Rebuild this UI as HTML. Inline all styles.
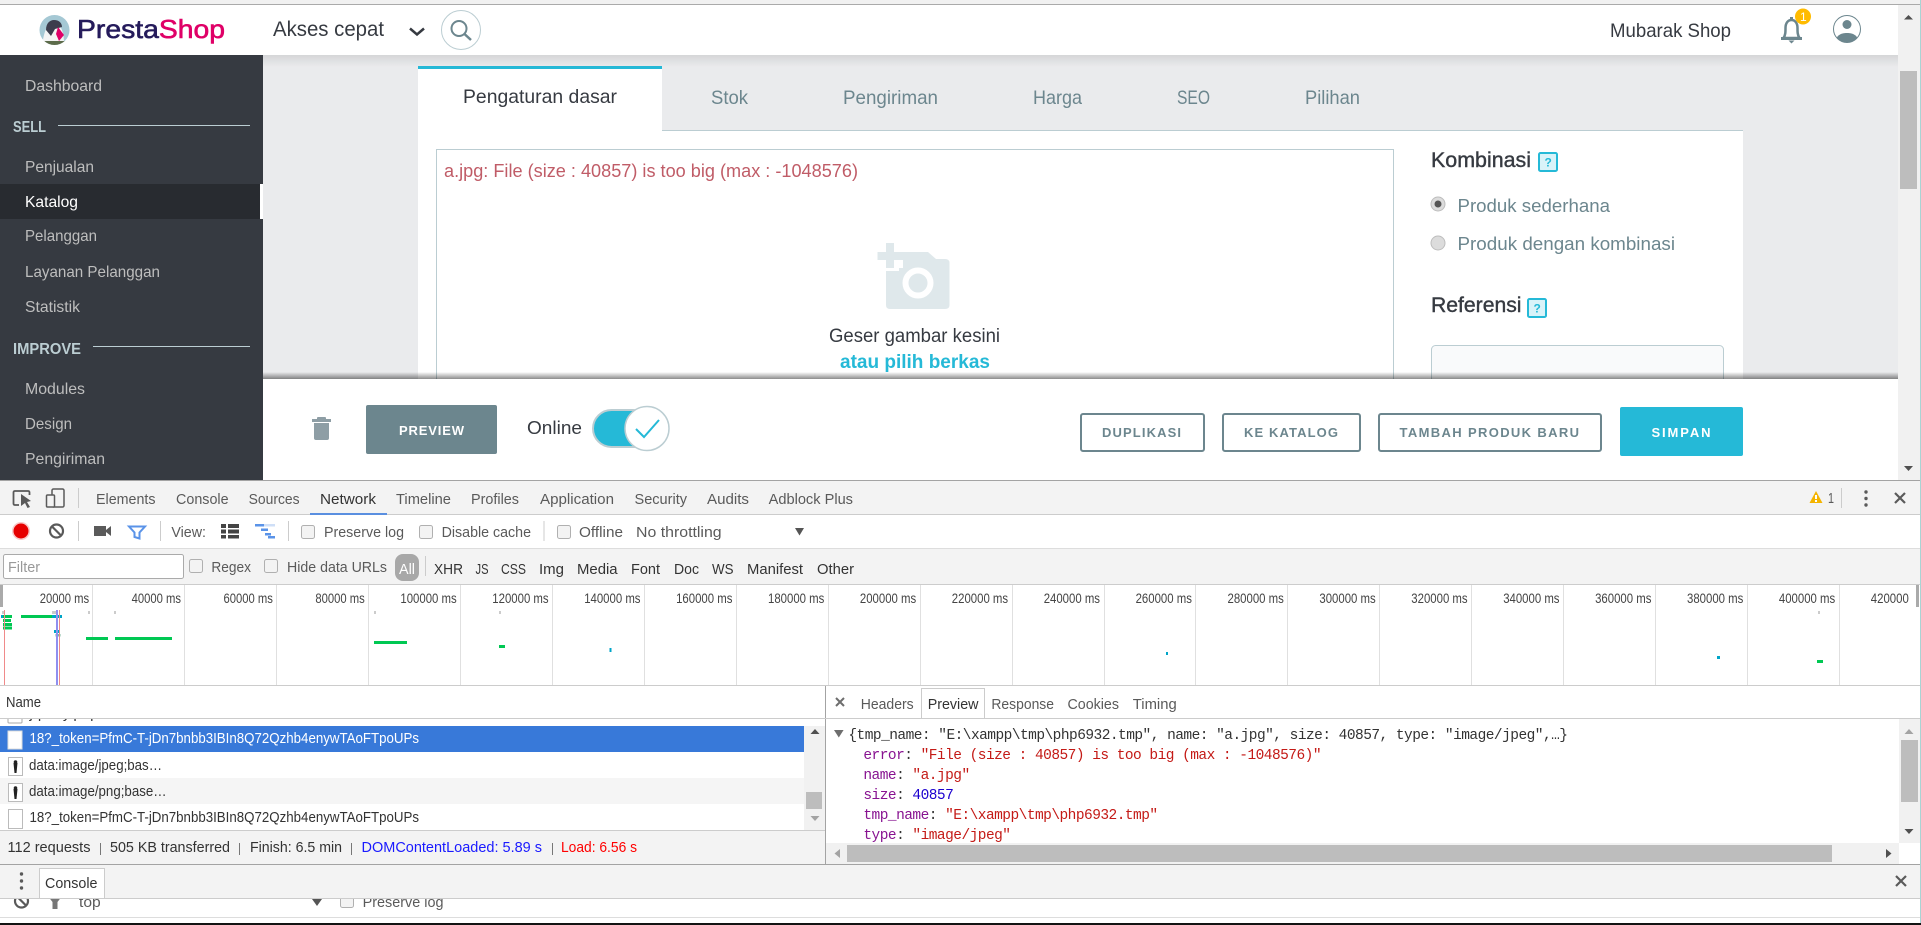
<!DOCTYPE html>
<html lang="id">
<head>
<meta charset="utf-8">
<title>PrestaShop - Produk</title>
<style>
html,body{margin:0;padding:0;background:#fff;overflow:hidden;width:1921px;height:925px}
svg{display:block;font-family:"Liberation Sans",Arial,sans-serif}
.side{font-size:16px;fill:#bebebe}
.sec{font-size:16px;font-weight:bold;fill:#bbcdd2}
.tab{font-size:19.5px;fill:#6c868e}
.btn{font-size:13px;font-weight:bold;fill:#6c868e}
.d{font-size:15px;fill:#5a5a5a}
.f{font-size:15px;fill:#333}
.t{font-size:13.5px;fill:#444}
.st{font-size:15px;fill:#333}
.m{font-family:"Liberation Mono",monospace;font-size:14.5px;letter-spacing:-.53px;fill:#333}
.k{fill:#881391}.v{fill:#c41a16}.n{fill:#1c00cf}
</style>
</head>
<body>
<svg width="1921" height="925" viewBox="0 0 1921 925" xmlns="http://www.w3.org/2000/svg">
<defs>
<linearGradient id="hs" x1="0" y1="0" x2="0" y2="1"><stop offset="0" stop-color="#000" stop-opacity=".09"/><stop offset="1" stop-color="#000" stop-opacity="0"/></linearGradient>
<linearGradient id="fs" x1="0" y1="0" x2="0" y2="1"><stop offset="0" stop-color="#000" stop-opacity="0"/><stop offset="1" stop-color="#000" stop-opacity=".45"/></linearGradient>
<clipPath id="tl"><rect x="0" y="585" width="1910" height="100"/></clipPath>
<clipPath id="rowclip"><rect x="0" y="719" width="804" height="7"/></clipPath>
<clipPath id="drawclip"><rect x="0" y="899" width="1921" height="18"/></clipPath>
<clipPath id="json"><rect x="826" y="719" width="1073" height="124"/></clipPath>
<clipPath id="logo"><circle cx="54.5" cy="30" r="15"/></clipPath>
<clipPath id="user"><circle cx="1847" cy="29" r="13.5"/></clipPath>
</defs>

<!-- window top -->
<rect width="1921" height="925" fill="#fff"/>
<rect width="1921" height="4" fill="#f1f1f1"/>
<rect y="4" width="1921" height="1" fill="#aaa"/>

<!-- content background -->
<rect x="263" y="55" width="1635" height="325" fill="#eaebed"/>

<!-- panel -->
<g>
<rect x="418" y="131" width="1325" height="250" fill="#fff"/>
<rect x="662" y="130" width="1081" height="1" fill="#bbcdd2"/>
<rect x="418" y="66" width="244" height="65" fill="#fff"/>
<rect x="418" y="66" width="244" height="3" fill="#25b9d7"/>
<text x="463" y="103" class="tab" style="fill:#363a41" textLength="154" lengthAdjust="spacingAndGlyphs">Pengaturan dasar</text>
<text x="711" y="104" class="tab" textLength="37" lengthAdjust="spacingAndGlyphs">Stok</text>
<text x="843" y="104" class="tab" textLength="95" lengthAdjust="spacingAndGlyphs">Pengiriman</text>
<text x="1033" y="104" class="tab" textLength="49" lengthAdjust="spacingAndGlyphs">Harga</text>
<text x="1177" y="104" class="tab" textLength="33" lengthAdjust="spacingAndGlyphs">SEO</text>
<text x="1305" y="104" class="tab" textLength="55" lengthAdjust="spacingAndGlyphs">Pilihan</text>

<!-- dropzone -->
<rect x="436.5" y="149.5" width="957" height="240" fill="#fff" stroke="#bbcdd2"/>
<text x="444" y="177" font-size="18.500" fill="#c05c67" textLength="414" lengthAdjust="spacingAndGlyphs">a.jpg: File (size : 40857) is too big (max : -1048576)</text>
<path fill="#dfe8eb" d="M903 252H928L936 259H945Q949.500 259 949.500 263V305Q949.500 309 945 309H890Q886 309 886 305V271H899V268H903Z"/>
<path fill="#dfe8eb" d="M886 243H894V252H903V260H894V268H886V260H877.500V252H886Z"/>
<circle cx="918" cy="283" r="12.500" fill="none" stroke="#fff" stroke-width="6"/>
<text x="829" y="342" font-size="19" fill="#363a41" textLength="171" lengthAdjust="spacingAndGlyphs">Geser gambar kesini</text>
<text x="840" y="368" font-size="19" font-weight="bold" fill="#25b9d7" textLength="150" lengthAdjust="spacingAndGlyphs">atau pilih berkas</text>

<!-- side form -->
<text x="1431" y="167" font-size="21" stroke="#363a41" stroke-width=".4" fill="#363a41" textLength="100" lengthAdjust="spacingAndGlyphs">Kombinasi</text>
<rect x="1539" y="153" width="18" height="18" rx="1.500" fill="#d9f3f9" stroke="#25b9d7" stroke-width="2"/>
<text x="1544.500" y="166.500" font-size="12" font-weight="bold" fill="#25b9d7">?</text>
<circle cx="1438" cy="204" r="7" fill="#dcdcdc" stroke="#bdbdbd"/>
<circle cx="1438" cy="204" r="3.500" fill="#555"/>
<text x="1457.500" y="212" font-size="18.500" fill="#6c868e" textLength="152.500" lengthAdjust="spacingAndGlyphs">Produk sederhana</text>
<circle cx="1438" cy="243" r="7" fill="#dcdcdc" stroke="#bdbdbd"/>
<text x="1457.500" y="250" font-size="18.500" fill="#6c868e" textLength="217.500" lengthAdjust="spacingAndGlyphs">Produk dengan kombinasi</text>
<text x="1431" y="312" font-size="21" stroke="#363a41" stroke-width=".4" fill="#363a41" textLength="90.500" lengthAdjust="spacingAndGlyphs">Referensi</text>
<rect x="1528" y="299" width="18" height="18" rx="1.500" fill="#d9f3f9" stroke="#25b9d7" stroke-width="2"/>
<text x="1533.500" y="312.500" font-size="12" font-weight="bold" fill="#25b9d7">?</text>
<rect x="1431.500" y="345.500" width="292" height="60" rx="4" fill="#f9fafb" stroke="#bbcdd2"/>
</g>

<!-- header -->
<rect x="0" y="5" width="1898" height="50" fill="#fff"/>
<rect x="263" y="55" width="1635" height="12" fill="url(#hs)"/>
<g clip-path="url(#logo)">
<rect x="39" y="15" width="31" height="31" fill="#a5c8d4"/>
<path d="M42 45C44 33 46 24 54 22C62 24 64 34 64 45Z" fill="#f4f4f4"/>
<path d="M46 30C46 23 50 20 54 20C59 20 62 23 62 27L55 29L51 36Z" fill="#3d3d4d"/>
<path d="M58 27L64 35L59 41L56 34Z" fill="#df0067"/>
<rect x="44" y="41" width="22" height="5" fill="#5c6b4a"/>
</g>
<text x="77" y="38" font-size="26" stroke-width=".6" textLength="148" lengthAdjust="spacingAndGlyphs"><tspan fill="#251b5b" stroke="#251b5b">Presta</tspan><tspan fill="#df0067" stroke="#df0067">Shop</tspan></text>
<text x="273" y="36" font-size="21.500" fill="#363a41" textLength="111" lengthAdjust="spacingAndGlyphs">Akses cepat</text>
<path d="M410 28.500L417 34.500L424 28.500" fill="none" stroke="#363a41" stroke-width="2.500"/>
<circle cx="461" cy="30" r="19.500" fill="#fff" stroke="#bbcdd2"/>
<circle cx="459" cy="28.500" r="7.500" fill="none" stroke="#6c868e" stroke-width="2"/>
<path d="M464.500 34L471 40" stroke="#6c868e" stroke-width="2.500" fill="none"/>
<text x="1610" y="37" font-size="19.500" fill="#363a41" textLength="121" lengthAdjust="spacingAndGlyphs">Mubarak Shop</text>
<path d="M1783.500 38C1785.500 35 1785.500 32 1785.500 28C1785.500 23 1788 20 1791.500 20S1797.500 23 1797.500 28C1797.500 32 1797.500 35 1799.500 38Z" fill="none" stroke="#6c868e" stroke-width="2.500"/>
<rect x="1781" y="37" width="21" height="3" fill="#6c868e"/>
<path d="M1788.500 40.500H1794.500L1791.500 43.500Z" fill="#6c868e"/>
<rect x="1790" y="17" width="3" height="3" fill="#6c868e"/>
<circle cx="1803" cy="16.500" r="8" fill="#fb0"/>
<text x="1800" y="21" font-size="12" fill="#fff">1</text>
<circle cx="1847" cy="29" r="13.500" fill="#fff" stroke="#6c868e"/>
<g clip-path="url(#user)">
<circle cx="1847" cy="24.500" r="4.500" fill="#6c868e"/>
<path d="M1836 44C1835 36 1840 33 1847 33S1859 36 1858 44Z" fill="#6c868e"/>
</g>

<!-- sidebar -->
<rect x="0" y="55" width="263" height="425" fill="#363a41"/>
<rect x="0" y="184" width="260" height="35" fill="#282b30"/>
<rect x="260" y="184" width="3" height="35" fill="#fff"/>
<text x="25" y="91" class="side" textLength="77" lengthAdjust="spacingAndGlyphs">Dashboard</text>
<text x="13" y="132" class="sec" textLength="33" lengthAdjust="spacingAndGlyphs">SELL</text>
<rect x="58" y="125" width="192" height="1" fill="#bbcdd2"/>
<text x="25" y="172" class="side" textLength="69" lengthAdjust="spacingAndGlyphs">Penjualan</text>
<text x="25" y="207" class="side" style="fill:#fff" textLength="53" lengthAdjust="spacingAndGlyphs">Katalog</text>
<text x="25" y="241" class="side" textLength="72" lengthAdjust="spacingAndGlyphs">Pelanggan</text>
<text x="25" y="277" class="side" textLength="135" lengthAdjust="spacingAndGlyphs">Layanan Pelanggan</text>
<text x="25" y="312" class="side" textLength="55" lengthAdjust="spacingAndGlyphs">Statistik</text>
<text x="13" y="354" class="sec" textLength="68" lengthAdjust="spacingAndGlyphs">IMPROVE</text>
<rect x="93" y="346" width="157" height="1" fill="#bbcdd2"/>
<text x="25" y="394" class="side" textLength="60" lengthAdjust="spacingAndGlyphs">Modules</text>
<text x="25" y="429" class="side" textLength="47" lengthAdjust="spacingAndGlyphs">Design</text>
<text x="25" y="464" class="side" textLength="80" lengthAdjust="spacingAndGlyphs">Pengiriman</text>

<!-- footer bar -->
<rect x="263" y="372" width="1635" height="7" fill="url(#fs)"/>
<rect x="263" y="379" width="1635" height="101" fill="#fff"/>
<g fill="#8e9ea5">
<rect x="312" y="419" width="19" height="3"/><rect x="317" y="417" width="9" height="3" rx="1"/>
<path d="M314 423H329V438Q329 440 327 440H316Q314 440 314 438Z"/>
</g>
<rect x="366" y="405" width="131" height="49" rx="2" fill="#6c868e"/>
<text x="399" y="435" class="btn" style="fill:#fff" textLength="65">PREVIEW</text>
<text x="527" y="434" font-size="18.500" fill="#363a41" textLength="55" lengthAdjust="spacingAndGlyphs">Online</text>
<rect x="593" y="410" width="58" height="37" rx="18.500" fill="#25b9d7" stroke="#bbcdd2" stroke-width="2"/>
<circle cx="647" cy="428.500" r="22" fill="#fff" stroke="#bbcdd2" stroke-width="1.500"/>
<path d="M636 429L644 437L659 420" fill="none" stroke="#25b9d7" stroke-width="2"/>
<rect x="1081" y="414" width="123" height="37" rx="2" fill="#fff" stroke="#6c868e" stroke-width="2"/>
<text x="1102" y="437" class="btn" textLength="79">DUPLIKASI</text>
<rect x="1223" y="414" width="137" height="37" rx="2" fill="#fff" stroke="#6c868e" stroke-width="2"/>
<text x="1244" y="437" class="btn" textLength="94">KE KATALOG</text>
<rect x="1379" y="414" width="222" height="37" rx="2" fill="#fff" stroke="#6c868e" stroke-width="2"/>
<text x="1399.500" y="437" class="btn" textLength="179.500">TAMBAH PRODUK BARU</text>
<rect x="1620" y="407" width="123" height="49" rx="2" fill="#25b9d7"/>
<text x="1651.500" y="437" class="btn" style="fill:#fff" textLength="59">SIMPAN</text>

<!-- page scrollbar -->
<rect x="1898" y="5" width="23" height="475" fill="#f1f1f1"/>
<rect x="1900" y="71" width="17" height="118" fill="#bdbdbd"/>
<path d="M1904 19.500H1913L1908.500 15Z" fill="#505050"/>
<path d="M1904 466H1913L1908.500 471Z" fill="#505050"/>

<!-- devtools main toolbar -->
<rect x="0" y="480" width="1921" height="1" fill="#a3a3a3"/>
<rect x="0" y="481" width="1921" height="33" fill="#f3f3f3"/>
<rect x="0" y="514" width="1921" height="1" fill="#ccc"/>
<path d="M19 505H15Q13.500 505 13.500 503.500V492.500Q13.500 491 15 491H28Q29.500 491 29.500 492.500V495" fill="none" stroke="#5a5a5a" stroke-width="1.800"/>
<path d="M21 494L31 501L27 502L30 507L27.500 508L25 503L21 506Z" fill="#5a5a5a"/>
<rect x="52" y="489" width="12" height="18" rx="1.500" fill="none" stroke="#5a5a5a" stroke-width="1.500"/>
<rect x="46.500" y="495" width="8" height="12" rx="1" fill="#f3f3f3" stroke="#5a5a5a" stroke-width="1.500"/>
<rect x="78" y="488" width="1" height="20" fill="#ccc"/>
<text x="96" y="504" class="d" textLength="59.500" lengthAdjust="spacingAndGlyphs">Elements</text>
<text x="176" y="504" class="d" textLength="52.600" lengthAdjust="spacingAndGlyphs">Console</text>
<text x="248.600" y="504" class="d" textLength="51" lengthAdjust="spacingAndGlyphs">Sources</text>
<text x="320" y="504" class="d" style="fill:#333" textLength="56" lengthAdjust="spacingAndGlyphs">Network</text>
<rect x="310" y="513" width="77" height="2" fill="#5a8fe0"/>
<text x="396" y="504" class="d" textLength="55" lengthAdjust="spacingAndGlyphs">Timeline</text>
<text x="471" y="504" class="d" textLength="48" lengthAdjust="spacingAndGlyphs">Profiles</text>
<text x="540" y="504" class="d" textLength="74" lengthAdjust="spacingAndGlyphs">Application</text>
<text x="634.500" y="504" class="d" textLength="52.500" lengthAdjust="spacingAndGlyphs">Security</text>
<text x="707" y="504" class="d" textLength="42" lengthAdjust="spacingAndGlyphs">Audits</text>
<text x="768.600" y="504" class="d" textLength="84.400" lengthAdjust="spacingAndGlyphs">Adblock Plus</text>
<path d="M1816 491L1822.500 503H1809.500Z" fill="#f4b400"/>
<rect x="1815" y="495" width="2" height="4" fill="#fff"/><rect x="1815" y="500" width="2" height="2" fill="#fff"/>
<text x="1828" y="503" class="d" textLength="6" lengthAdjust="spacingAndGlyphs">1</text>
<rect x="1841" y="488" width="1" height="20" fill="#ccc"/>
<circle cx="1866" cy="492" r="1.700" fill="#5a5a5a"/><circle cx="1866" cy="498.500" r="1.700" fill="#5a5a5a"/><circle cx="1866" cy="505" r="1.700" fill="#5a5a5a"/>
<path d="M1895 493L1905 503M1905 493L1895 503" stroke="#5a5a5a" stroke-width="2.200"/>

<!-- network toolbar -->
<rect x="0" y="515" width="1921" height="33" fill="#fff"/>
<rect x="0" y="548" width="1921" height="1" fill="#ddd"/>
<circle cx="21" cy="531" r="9" fill="#f9c9c9"/><circle cx="21" cy="531" r="7.500" fill="#e60000"/>
<circle cx="56.500" cy="531" r="6.500" fill="none" stroke="#5a5a5a" stroke-width="2.200"/>
<path d="M52 526.500L61 535.500" stroke="#5a5a5a" stroke-width="2.200"/>
<rect x="78" y="521" width="1" height="20" fill="#ccc"/>
<rect x="94" y="526" width="12" height="10" fill="#5a5a5a"/><path d="M106 530L111 526V536L106 532Z" fill="#5a5a5a"/>
<path d="M129 526.500H145L139.500 532.500V538.500L134.500 537V532.500Z" fill="none" stroke="#5a93e8" stroke-width="2"/>
<rect x="160" y="521" width="1" height="20" fill="#ccc"/>
<text x="171.400" y="537" class="d" textLength="34.600" lengthAdjust="spacingAndGlyphs">View:</text>
<g fill="#444"><rect x="221" y="524" width="5" height="4"/><rect x="228" y="524" width="11" height="4"/><rect x="221" y="529.500" width="5" height="4"/><rect x="228" y="529.500" width="11" height="4"/><rect x="221" y="535" width="5" height="3.500"/><rect x="228" y="535" width="11" height="3.500"/></g>
<g fill="#5a93e8"><rect x="255" y="524" width="9" height="2.500"/><rect x="261" y="528.500" width="7" height="2.500"/><rect x="265" y="533" width="6" height="2.500"/><rect x="268" y="536" width="7" height="2.500"/></g>
<rect x="264" y="524" width="11" height="2.500" fill="#cfdff7"/>
<rect x="288" y="521" width="1" height="20" fill="#ccc"/>
<rect x="301.500" y="525.500" width="13" height="13" rx="2" fill="#f3f3f3" stroke="#b0b0b0"/>
<text x="324" y="537" class="d" textLength="80" lengthAdjust="spacingAndGlyphs">Preserve log</text>
<rect x="419.500" y="525.500" width="13" height="13" rx="2" fill="#f3f3f3" stroke="#b0b0b0"/>
<text x="441.600" y="537" class="d" textLength="89.400" lengthAdjust="spacingAndGlyphs">Disable cache</text>
<rect x="543.500" y="521" width="1" height="20" fill="#ccc"/>
<rect x="557.500" y="525.500" width="13" height="13" rx="2" fill="#f3f3f3" stroke="#b0b0b0"/>
<text x="579" y="537" class="d" textLength="44" lengthAdjust="spacingAndGlyphs">Offline</text>
<text x="636" y="537" class="d" textLength="85.600" lengthAdjust="spacingAndGlyphs">No throttling</text>
<path d="M795 528H804L799.500 535.500Z" fill="#555"/>

<!-- filter bar -->
<rect x="0" y="549" width="1921" height="35" fill="#f3f3f3"/>
<rect x="0" y="584" width="1921" height="1" fill="#ccc"/>
<rect x="3.500" y="554.500" width="180" height="24" rx="2" fill="#fff" stroke="#aaa"/>
<text x="8" y="572" class="d" style="fill:#999" textLength="32" lengthAdjust="spacingAndGlyphs">Filter</text>
<rect x="189.500" y="559.500" width="13" height="13" rx="2" fill="#f3f3f3" stroke="#b0b0b0"/>
<text x="211.400" y="572" class="d" textLength="39.600" lengthAdjust="spacingAndGlyphs">Regex</text>
<rect x="264.500" y="559.500" width="13" height="13" rx="2" fill="#f3f3f3" stroke="#b0b0b0"/>
<text x="287" y="572" class="d" textLength="100" lengthAdjust="spacingAndGlyphs">Hide data URLs</text>
<rect x="395" y="554" width="24" height="27" rx="8" fill="#a8a8a8"/>
<text x="399" y="574" class="d" style="fill:#fff" textLength="16" lengthAdjust="spacingAndGlyphs">All</text>
<rect x="425" y="556" width="1" height="20" fill="#ccc"/>
<text x="434" y="574" class="f" textLength="29" lengthAdjust="spacingAndGlyphs">XHR</text>
<text x="475.500" y="574" class="f" textLength="13" lengthAdjust="spacingAndGlyphs">JS</text>
<text x="501" y="574" class="f" textLength="25" lengthAdjust="spacingAndGlyphs">CSS</text>
<text x="539" y="574" class="f" textLength="25" lengthAdjust="spacingAndGlyphs">Img</text>
<text x="577" y="574" class="f" textLength="40.600" lengthAdjust="spacingAndGlyphs">Media</text>
<text x="631" y="574" class="f" textLength="29" lengthAdjust="spacingAndGlyphs">Font</text>
<text x="674" y="574" class="f" textLength="25" lengthAdjust="spacingAndGlyphs">Doc</text>
<text x="712" y="574" class="f" textLength="21.500" lengthAdjust="spacingAndGlyphs">WS</text>
<text x="747" y="574" class="f" textLength="56" lengthAdjust="spacingAndGlyphs">Manifest</text>
<text x="817" y="574" class="f" textLength="37" lengthAdjust="spacingAndGlyphs">Other</text>

<!-- timeline -->
<rect x="0" y="585" width="1921" height="100" fill="#fff"/>
<g fill="#e0e0e0">
<rect x="92" y="585" width="1" height="100"/><rect x="184" y="585" width="1" height="100"/><rect x="276" y="585" width="1" height="100"/><rect x="368" y="585" width="1" height="100"/><rect x="460" y="585" width="1" height="100"/><rect x="552" y="585" width="1" height="100"/><rect x="644" y="585" width="1" height="100"/><rect x="736" y="585" width="1" height="100"/><rect x="828" y="585" width="1" height="100"/><rect x="920" y="585" width="1" height="100"/><rect x="1012" y="585" width="1" height="100"/><rect x="1104" y="585" width="1" height="100"/><rect x="1195" y="585" width="1" height="100"/><rect x="1287" y="585" width="1" height="100"/><rect x="1379" y="585" width="1" height="100"/><rect x="1471" y="585" width="1" height="100"/><rect x="1563" y="585" width="1" height="100"/><rect x="1655" y="585" width="1" height="100"/><rect x="1747" y="585" width="1" height="100"/><rect x="1839" y="585" width="1" height="100"/>
</g>
<g clip-path="url(#tl)">
<text x="39.700" y="603" class="t" textLength="49.400" lengthAdjust="spacingAndGlyphs">20000 ms</text>
<text x="131.600" y="603" class="t" textLength="49.400" lengthAdjust="spacingAndGlyphs">40000 ms</text>
<text x="223.500" y="603" class="t" textLength="49.400" lengthAdjust="spacingAndGlyphs">60000 ms</text>
<text x="315.400" y="603" class="t" textLength="49.400" lengthAdjust="spacingAndGlyphs">80000 ms</text>
<text x="400.400" y="603" class="t" textLength="56.300" lengthAdjust="spacingAndGlyphs">100000 ms</text>
<text x="492.300" y="603" class="t" textLength="56.300" lengthAdjust="spacingAndGlyphs">120000 ms</text>
<text x="584.200" y="603" class="t" textLength="56.300" lengthAdjust="spacingAndGlyphs">140000 ms</text>
<text x="676.100" y="603" class="t" textLength="56.300" lengthAdjust="spacingAndGlyphs">160000 ms</text>
<text x="768" y="603" class="t" textLength="56.300" lengthAdjust="spacingAndGlyphs">180000 ms</text>
<text x="859.900" y="603" class="t" textLength="56.300" lengthAdjust="spacingAndGlyphs">200000 ms</text>
<text x="951.800" y="603" class="t" textLength="56.300" lengthAdjust="spacingAndGlyphs">220000 ms</text>
<text x="1043.700" y="603" class="t" textLength="56.300" lengthAdjust="spacingAndGlyphs">240000 ms</text>
<text x="1135.600" y="603" class="t" textLength="56.300" lengthAdjust="spacingAndGlyphs">260000 ms</text>
<text x="1227.500" y="603" class="t" textLength="56.300" lengthAdjust="spacingAndGlyphs">280000 ms</text>
<text x="1319.400" y="603" class="t" textLength="56.300" lengthAdjust="spacingAndGlyphs">300000 ms</text>
<text x="1411.300" y="603" class="t" textLength="56.300" lengthAdjust="spacingAndGlyphs">320000 ms</text>
<text x="1503.200" y="603" class="t" textLength="56.300" lengthAdjust="spacingAndGlyphs">340000 ms</text>
<text x="1595.100" y="603" class="t" textLength="56.300" lengthAdjust="spacingAndGlyphs">360000 ms</text>
<text x="1687" y="603" class="t" textLength="56.300" lengthAdjust="spacingAndGlyphs">380000 ms</text>
<text x="1778.900" y="603" class="t" textLength="56.300" lengthAdjust="spacingAndGlyphs">400000 ms</text>
<text x="1870.800" y="603" class="t" textLength="56.300" lengthAdjust="spacingAndGlyphs">420000 ms</text>
</g>
<rect x="0" y="585" width="3" height="22" fill="#aaa"/>
<rect x="1916" y="585" width="3" height="22" fill="#aaa"/>
<g fill="#ccc"><rect x="2" y="611" width="2" height="3"/><rect x="52" y="611" width="6" height="3"/><rect x="88" y="611" width="2" height="3"/><rect x="114" y="611" width="2" height="3"/><rect x="374" y="611" width="2" height="3"/><rect x="499" y="611" width="2" height="3"/><rect x="1818" y="611" width="2" height="3"/></g>
<g fill="#00c853">
<rect x="1" y="615" width="11" height="3"/><rect x="3" y="619" width="8" height="3"/><rect x="3" y="623" width="9" height="3"/><rect x="3" y="626.500" width="9" height="3"/>
<rect x="21" y="615" width="41" height="3"/><rect x="86" y="637" width="22" height="3"/><rect x="115" y="637" width="57" height="3"/><rect x="374" y="641" width="33" height="3"/>
<rect x="499" y="645" width="6" height="3"/><rect x="1817" y="660" width="6" height="3"/>
</g>
<g fill="#00a5c8"><rect x="54" y="630" width="6" height="3"/><rect x="1" y="615" width="2" height="3"/><rect x="52" y="615" width="10" height="3"/><rect x="609.500" y="648" width="2" height="4"/><rect x="1166" y="652" width="2" height="3"/><rect x="1717" y="656" width="3" height="3"/></g>
<rect x="55.500" y="634" width="5" height="2.500" fill="#7fb8a0"/>
<rect x="4" y="610" width="1" height="75" fill="#f08a8a"/>
<rect x="56" y="610" width="2" height="75" fill="#8f8ff0"/>
<rect x="59" y="610" width="1" height="75" fill="#f08a8a"/>

<!-- name header & list -->
<rect x="0" y="685" width="1921" height="1" fill="#ccc"/>
<text x="6" y="707" class="st" textLength="35" lengthAdjust="spacingAndGlyphs">Name</text>
<rect x="825" y="686" width="1" height="178" fill="#a3a3a3"/>
<rect x="0" y="718" width="1921" height="1" fill="#ccc"/>
<g clip-path="url(#rowclip)">
<rect x="8" y="706" width="14" height="17" rx="1" fill="#fff" stroke="#aaa"/>
<text x="29.500" y="718" class="st">jquery.php</text>
</g>
<rect x="0" y="726" width="804" height="26" fill="#3879d9"/>
<rect x="8" y="731" width="14" height="18" fill="#fff" stroke="#ddd"/>
<text x="29.500" y="743" font-size="14.500" fill="#fff" textLength="389.500" lengthAdjust="spacingAndGlyphs">18?_token=PfmC-T-jDn7bnbb3IBIn8Q72Qzhb4enywTAoFTpoUPs</text>
<rect x="0" y="752" width="804" height="26" fill="#fff"/>
<rect x="8.500" y="757.500" width="14" height="18" fill="#fff" stroke="#bbb"/>
<path d="M13.500 763H17.500L16.500 773H14.500Z" fill="#222"/><circle cx="15.500" cy="762" r="1.800" fill="#222"/>
<text x="29" y="770" font-size="14.500" fill="#333" textLength="133" lengthAdjust="spacingAndGlyphs">data:image/jpeg;bas…</text>
<rect x="0" y="778" width="804" height="26" fill="#f5f5f5"/>
<rect x="8.500" y="783.500" width="14" height="18" fill="#fff" stroke="#bbb"/>
<path d="M13.500 789H17.500L16.500 799H14.500Z" fill="#222"/><circle cx="15.500" cy="788" r="1.800" fill="#222"/>
<text x="29" y="796" font-size="14.500" fill="#333" textLength="137.600" lengthAdjust="spacingAndGlyphs">data:image/png;base…</text>
<rect x="8.500" y="809.500" width="14" height="19" fill="#fff" stroke="#bbb"/>
<text x="29.500" y="822" font-size="14.500" fill="#333" textLength="389.500" lengthAdjust="spacingAndGlyphs">18?_token=PfmC-T-jDn7bnbb3IBIn8Q72Qzhb4enywTAoFTpoUPs</text>
<rect x="804" y="726" width="21" height="104" fill="#f1f1f1"/>
<path d="M810.500 734H819.500L815 729Z" fill="#505050"/>
<rect x="806" y="792" width="16" height="17" fill="#bdbdbd"/>
<path d="M810.500 816H819.500L815 821Z" fill="#a3a3a3"/>

<!-- status bar -->
<rect x="0" y="830" width="825" height="34" fill="#f3f3f3"/>
<rect x="0" y="830" width="825" height="1" fill="#ccc"/>
<text x="7.500" y="852" class="st" textLength="83" lengthAdjust="spacingAndGlyphs">112 requests</text>
<rect x="100" y="843" width="1" height="12" fill="#777"/>
<text x="110" y="852" class="st" textLength="120" lengthAdjust="spacingAndGlyphs">505 KB transferred</text>
<rect x="239" y="843" width="1" height="12" fill="#777"/>
<text x="250" y="852" class="st" textLength="92" lengthAdjust="spacingAndGlyphs">Finish: 6.5 min</text>
<rect x="351" y="843" width="1" height="12" fill="#777"/>
<text x="361.500" y="852" class="st" style="fill:#1a1aff" textLength="180.500" lengthAdjust="spacingAndGlyphs">DOMContentLoaded: 5.89 s</text>
<rect x="552" y="843" width="1" height="12" fill="#777"/>
<text x="561" y="852" class="st" style="fill:#f00" textLength="76" lengthAdjust="spacingAndGlyphs">Load: 6.56 s</text>

<!-- preview pane -->
<path d="M836 698L844 706M844 698L836 706" stroke="#6e6e6e" stroke-width="2"/>
<text x="860.700" y="709" class="d" textLength="53" lengthAdjust="spacingAndGlyphs">Headers</text>
<rect x="921.500" y="688.500" width="63" height="30" fill="#fff" stroke="#ccc"/>
<text x="927.700" y="709" class="f" textLength="50.800" lengthAdjust="spacingAndGlyphs">Preview</text>
<text x="991.400" y="709" class="d" textLength="62.600" lengthAdjust="spacingAndGlyphs">Response</text>
<text x="1067.500" y="709" class="d" textLength="51.500" lengthAdjust="spacingAndGlyphs">Cookies</text>
<text x="1132.800" y="709" class="d" textLength="43.900" lengthAdjust="spacingAndGlyphs">Timing</text>
<g clip-path="url(#json)">
<path d="M834 730H843.600L838.800 737.500Z" fill="#6e6e6e"/>
<text x="848.400" y="739" class="m" xml:space="preserve">{tmp_name: "E:\xampp\tmp\php6932.tmp", name: "a.jpg", size: 40857, type: "image/jpeg",…}</text>
<text x="863.400" y="759" class="m" xml:space="preserve"><tspan class="k">error</tspan>: <tspan class="v">"File (size : 40857) is too big (max : -1048576)"</tspan></text>
<text x="863.400" y="779" class="m" xml:space="preserve"><tspan class="k">name</tspan>: <tspan class="v">"a.jpg"</tspan></text>
<text x="863.400" y="799" class="m" xml:space="preserve"><tspan class="k">size</tspan>: <tspan class="n">40857</tspan></text>
<text x="863.400" y="819" class="m" xml:space="preserve"><tspan class="k">tmp_name</tspan>: <tspan class="v">"E:\xampp\tmp\php6932.tmp"</tspan></text>
<text x="863.400" y="839" class="m" xml:space="preserve"><tspan class="k">type</tspan>: <tspan class="v">"image/jpeg"</tspan></text>
</g>
<rect x="826" y="843" width="1073" height="21" fill="#f1f1f1"/>
<rect x="847" y="845" width="985" height="17" fill="#bdbdbd"/>
<path d="M840 849V858L834.500 853.500Z" fill="#a3a3a3"/>
<path d="M1886 849V858L1891.500 853.500Z" fill="#505050"/>
<rect x="1899" y="719" width="21" height="124" fill="#f1f1f1"/>
<path d="M1904.500 734H1913.500L1909 729Z" fill="#a3a3a3"/>
<rect x="1901" y="740" width="17" height="62" fill="#bdbdbd"/>
<path d="M1904.500 829H1913.500L1909 834Z" fill="#505050"/>

<!-- drawer -->
<rect x="0" y="864" width="1921" height="1" fill="#a3a3a3"/>
<rect x="0" y="865" width="1921" height="33" fill="#f3f3f3"/>
<rect x="0" y="898" width="1921" height="1" fill="#ccc"/>
<circle cx="21.500" cy="874" r="1.700" fill="#5a5a5a"/><circle cx="21.500" cy="881" r="1.700" fill="#5a5a5a"/><circle cx="21.500" cy="888" r="1.700" fill="#5a5a5a"/>
<rect x="39.500" y="868.500" width="65" height="30" fill="#fff" stroke="#ccc"/>
<text x="45" y="888" class="f" textLength="52.500" lengthAdjust="spacingAndGlyphs">Console</text>
<path d="M1896 876L1906 886M1906 876L1896 886" stroke="#5a5a5a" stroke-width="2.200"/>
<g clip-path="url(#drawclip)">
<circle cx="21.500" cy="901" r="6.500" fill="none" stroke="#5a5a5a" stroke-width="2.200"/>
<path d="M17 896.500L26 905.500" stroke="#5a5a5a" stroke-width="2.200"/>
<path d="M47 895H63L57.500 902V909H52.500V902Z" fill="#777"/>
<text x="79" y="907" class="d" textLength="21.700" lengthAdjust="spacingAndGlyphs">top</text>
<path d="M312 899H322L317 906Z" fill="#555"/>
<rect x="340.500" y="894.500" width="13" height="13" rx="2" fill="#f3f3f3" stroke="#b0b0b0"/>
<text x="362.600" y="907" class="d" textLength="80.900" lengthAdjust="spacingAndGlyphs">Preserve log</text>
</g>
<rect x="0" y="917" width="1921" height="1" fill="#ddd"/>
<rect x="0" y="923" width="1921" height="2" fill="#131313"/>
<rect x="1920" y="0" width="1" height="923" fill="#a8d4d4"/>
</svg>
</body>
</html>
